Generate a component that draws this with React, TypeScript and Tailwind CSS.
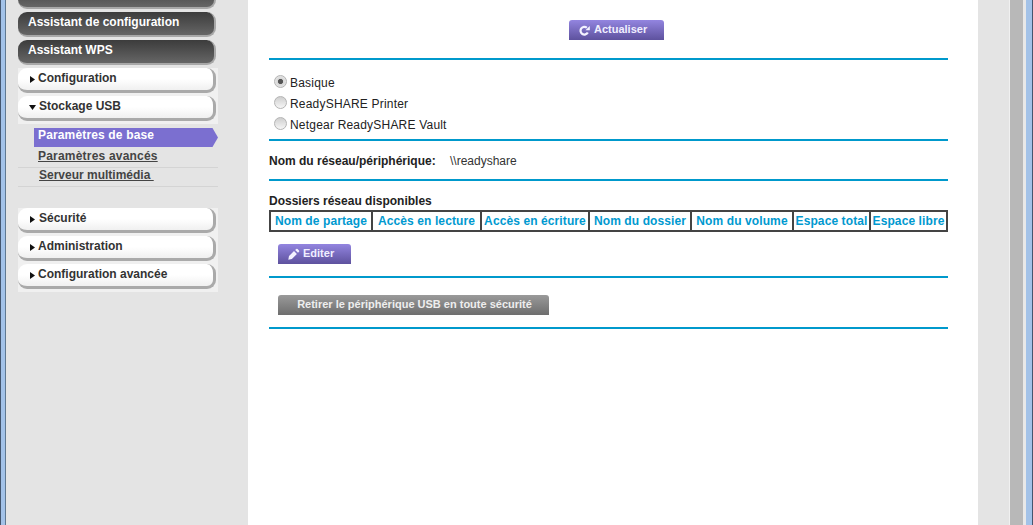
const font = "font-['Liberation_Sans',Arial,sans-serif]";

const columns = [
  { name: 'Nom de partage', width: 'w-[102px]' },
  { name: 'Accès en lecture', width: 'w-[109px]' },
  { name: 'Accès en écriture', width: 'w-[108px]' },
  { name: 'Nom du dossier', width: 'w-[102px]' },
  { name: 'Nom du volume', width: 'w-[102px]' },
  { name: 'Espace total', width: 'w-[77px]' },
  { name: 'Espace libre', width: 'w-[77px]' },
];

const DarkItem = ({ label }: { label: string }) => (
  <div className="h-[25px] w-[198px] pl-[10px] rounded-[9px] bg-gradient-to-b from-[#3c3c3c] to-[#666666] border-r-2 border-b-2 border-[#a8a8a8] text-white text-xs font-bold leading-[21px]">
    {label}
  </div>
);

const WhiteItem = ({ label, open = false, nudge = false }: { label: string; open?: boolean; nudge?: boolean }) => (
  <div className="h-[25px] w-[198px] pl-[11px] rounded-[9px] bg-gradient-to-b from-white via-white to-[#f0f0f0] border-r-[3px] border-b-[3px] border-[#aaaaaa] flex items-center gap-[2px] text-[#333] text-xs font-bold">
    <span className="w-[7px] flex justify-center">
      {open ? (
        <svg width="7" height="5" viewBox="0 0 7 5"><path d="M0 0h7L3.5 5z" fill="#111" /></svg>
      ) : (
        <svg width="5" height="7" viewBox="0 0 5 7"><path d="M0 0l5 3.5L0 7z" fill="#111" /></svg>
      )}
    </span>
    <span className={nudge ? 'pb-[2px] ml-px' : 'pb-[3px]'}>{label}</span>
  </div>
);

const Radio = ({ label, checked = false }: { label: string; checked?: boolean }) => (
  <label className="h-[21px] flex items-center gap-[3px] pl-[5px] text-xs text-[#222] tracking-[0.2px]">
    <input
      type="radio"
      name="mode"
      defaultChecked={checked}
      className="appearance-none w-[13px] h-[13px] mb-[3px] rounded-full border border-[#b4b4b4] bg-gradient-to-b from-[#cfcfcf] to-[#f6f6f6] checked:bg-[radial-gradient(circle,#555555_0,#555555_28%,#d8d8d8_38%,#efefef_100%)]"
    />
    <span>{label}</span>
  </label>
);

const Rule = ({ className = '' }: { className?: string }) => (
  <div className={`h-[2px] bg-[#0099cc] ${className}`} />
);

const RefreshIcon = () => (
  <svg width="11" height="11" viewBox="0 0 12 12" fill="none" className="mt-[3px]">
    <path d="M9.6 8.2A4.2 4.2 0 1 1 8.6 3" stroke="#f4f2ff" strokeWidth="2.4" />
    <path d="M7 5.8h4.8V1z" fill="#f4f2ff" />
  </svg>
);

const PencilIcon = () => (
  <svg width="12" height="12" viewBox="0 0 12 12" className="mt-[1px]">
    <path d="M0.3 11.7l0.7-3.6 5-5 2.9 2.9-5 5z" fill="#f4f2ff" />
    <path d="M7.2 2l1-1a1 1 0 0 1 1.4 0l1.4 1.4a1 1 0 0 1 0 1.4l-1 1z" fill="#f4f2ff" />
  </svg>
);

export default function App() {
  return (
    <div className={`${font} h-[525px] w-[1033px] overflow-hidden flex bg-[#e4e4e4]`}>
      {/* window frame, left */}
      <div className="w-[6px] shrink-0 bg-[#a3c2e8] border-l border-r border-l-[#44566e] border-r-[#5f7891]" />

      {/* side menu */}
      <nav className="w-[242px] shrink-0 pl-3">
        <div className="flex flex-col gap-[3px] -mt-4">
          <DarkItem label="" />
          <DarkItem label="Assistant de configuration" />
          <DarkItem label="Assistant WPS" />
        </div>

        <div className="mt-[3px] w-[200px] pb-[3px] flex flex-col gap-[3px] bg-[#f0f0f0]">
          <WhiteItem label="Configuration" />
          <WhiteItem label="Stockage USB" open nudge />
        </div>

        <div className="w-[200px] mt-1 text-xs font-bold">
          <div className="ml-4 h-[19px] pl-1 bg-[#7b6fd0] text-white leading-[14px] tracking-[0.15px] [clip-path:polygon(0_0,97%_0,100%_50%,97%_100%,0_100%)]">
            Paramètres de base
          </div>
          <div className="h-[21px] pl-5 pt-[2px] leading-[14px] text-[#444] underline tracking-[0.2px] border-b border-[#d4d4d4]">
            Paramètres avancés
          </div>
          <div className="h-[19px] pl-[21px] leading-[14px] text-[#444] underline border-b border-[#d4d4d4]">
            Serveur multimédia&nbsp;
          </div>
        </div>

        <div className="mt-[21px] w-[200px] pb-[3px] flex flex-col gap-[3px] bg-[#f0f0f0]">
          <WhiteItem label="Sécurité" nudge />
          <WhiteItem label="Administration" />
          <WhiteItem label="Configuration avancée" />
        </div>
      </nav>

      {/* main panel */}
      <main className="w-[730px] shrink-0 bg-white pl-[21px] pr-[30px] pt-5 text-xs">
        <div className="flex justify-center">
          <button className="h-5 w-[95px] ml-4 pl-[10px] rounded-t-[3px] bg-gradient-to-b from-[#9385e0] to-[#5e529e] text-[#f0eeff] text-[11px] font-bold flex items-center gap-1 pb-[2px]">
            <RefreshIcon />
            Actualiser
          </button>
        </div>
        <Rule className="mt-[18px]" />

        <div className="pt-3 pb-1 flex flex-col">
          <Radio label="Basique" checked />
          <Radio label="ReadySHARE Printer" />
          <Radio label="Netgear ReadySHARE Vault" />
        </div>
        <Rule />

        <div className="h-[38px] pt-px flex items-center">
          <span className="w-[181px] font-bold text-[#222]">Nom du réseau/périphérique:</span>
          <span className="text-[#333]">\\readyshare</span>
        </div>
        <Rule />

        <p className="mt-[13px] leading-[14px] font-bold text-[#222]">Dossiers réseau disponibles</p>
        <table className="mt-[2px] w-[679px] table-fixed border-collapse border-2 border-[#444444]">
          <thead>
            <tr className="h-5">
              {columns.map((col) => (
                <th key={col.name} className={`${col.width} p-0 border-2 border-[#444444] text-[#0099d0] text-xs font-bold text-center tracking-[0.1px]`}>
                  {col.name}
                </th>
              ))}
            </tr>
          </thead>
        </table>

        <button className="mt-3 ml-[9px] pl-[10px] h-5 w-[73px] rounded-t-[3px] bg-gradient-to-b from-[#9385e0] to-[#5e529e] text-[#f0eeff] text-[11px] font-bold flex items-center gap-[3px] pb-[2px]">
          <PencilIcon />
          Editer
        </button>
        <Rule className="mt-3" />

        <button className="mt-[17px] ml-[9px] pl-[2px] h-5 w-[271px] rounded-t-[3px] bg-gradient-to-b from-[#9a9a9a] to-[#6e6e6e] text-[#eeeeee] text-[11px] font-bold text-center pb-[2px]">
          Retirer le périphérique USB en toute sécurité
        </button>
        <Rule className="mt-3" />
      </main>

      {/* scroll track and frame, right */}
      <div className="flex-1 flex">
        <div className="w-[32px] bg-[#e4e4e4] border-r border-[#f0f0f0]" />
        <div className="w-[13px] bg-[#b8b8b8]" />
        <div className="w-[3px] bg-[#e8e8e8]" />
        <div className="w-[6px] bg-[#a3c2e8]" />
        <div className="flex-1 bg-[#44566e]" />
      </div>
    </div>
  );
}
